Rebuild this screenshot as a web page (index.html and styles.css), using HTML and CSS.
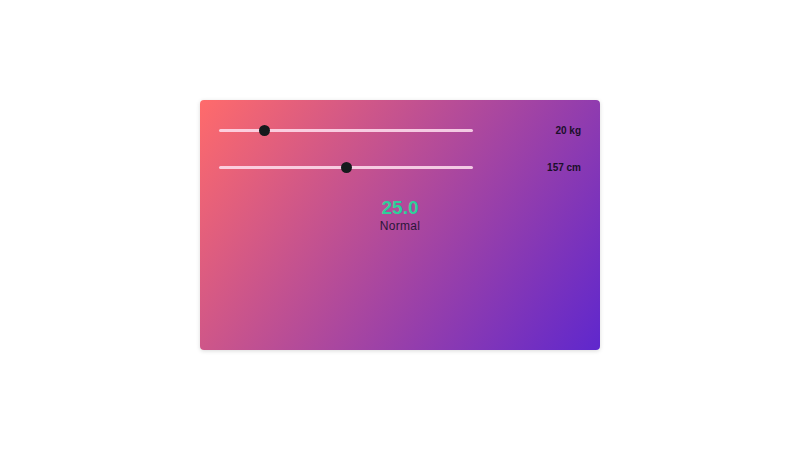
FILE: index.html
```html
<!DOCTYPE html>
<html lang="en">
<head>
<meta charset="utf-8">
<title>BMI</title>
<link rel="stylesheet" href="styles.css">
</head>
<body>
<div class="page">
  <div class="card">
    <div class="row">
      <input class="slider" type="range" min="10" max="71" value="20">
      <span class="label">20 kg</span>
    </div>
    <div class="row">
      <input class="slider" type="range" min="100" max="214" value="157">
      <span class="label">157 cm</span>
    </div>
    <div class="result">
      <div class="bmi">25.0</div>
      <div class="status">Normal</div>
    </div>
  </div>
</div>
</body>
</html>
```
FILE: styles.css
```css
* { box-sizing: border-box; }
html, body { margin: 0; padding: 0; background: #ffffff; }
body { font-family: "Liberation Sans", Arial, sans-serif; }
.page {
  width: 800px;
  height: 450px;
  display: flex;
  align-items: center;
  justify-content: center;
}
.card {
  width: 400px;
  height: 250px;
  border-radius: 4px;
  background: linear-gradient(125deg, #ff6b6b 0%, #5f27cd 100%);
  box-shadow: 0 1px 4px rgba(0, 0, 0, 0.15);
  padding: 20px 19px 0 19px;
  display: flex;
  flex-direction: column;
}
.row {
  display: flex;
  align-items: center;
  justify-content: space-between;
  height: 20px;
  margin-bottom: 17px;
}
.slider {
  -webkit-appearance: none;
  appearance: none;
  width: 254px;
  height: 11px;
  margin: 0;
  padding: 0;
  background: transparent;
}
.slider::-webkit-slider-runnable-track {
  height: 3px;
  background: rgba(255, 225, 240, 0.85);
  border-radius: 2px;
}
.slider::-webkit-slider-thumb {
  -webkit-appearance: none;
  appearance: none;
  width: 11px;
  height: 11px;
  border-radius: 50%;
  background: #151a1c;
  margin-top: -4px;
  border: none;
}
.label {
  font-size: 10px;
  font-weight: bold;
  color: #1a0f2a;
}
.result {
  margin-top: 3px;
  display: flex;
  flex-direction: column;
  align-items: center;
}
.bmi {
  font-size: 19px;
  font-weight: bold;
  color: #2ed09a;
  line-height: 22px;
}
.status {
  font-size: 12px;
  color: #2a1638;
  line-height: 14px;
  letter-spacing: 0.3px;
}
```
